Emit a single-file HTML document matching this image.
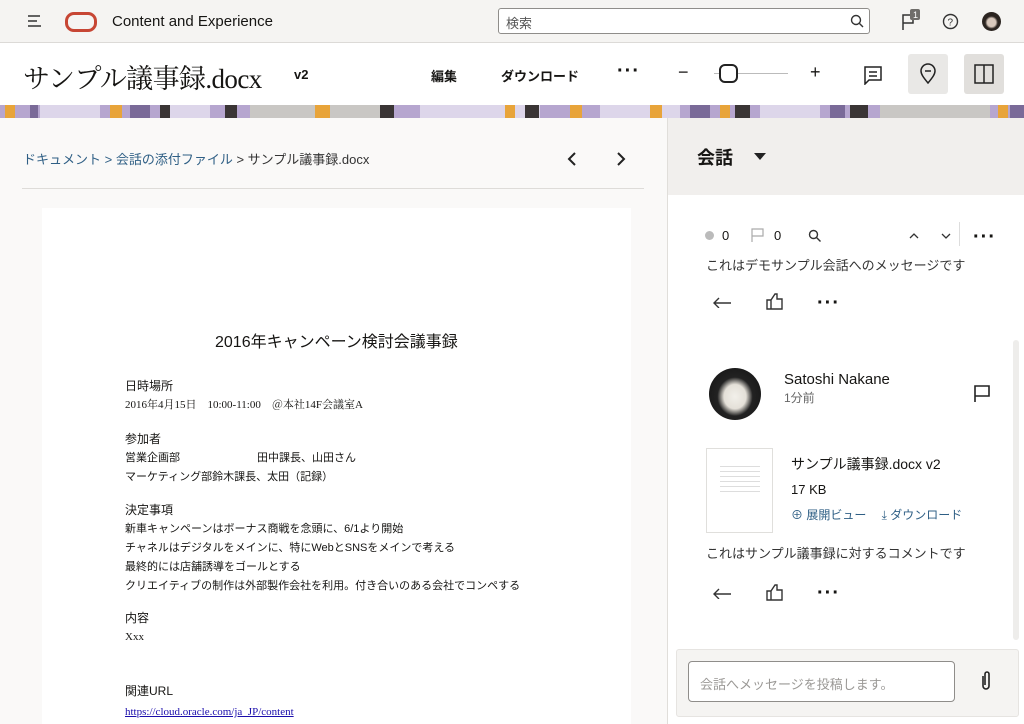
<!DOCTYPE html>
<html><head><meta charset="utf-8"><style>
*{box-sizing:border-box;margin:0;padding:0}
body{width:1024px;height:724px;overflow:hidden;position:relative;background:#faf9f8;font-family:"Liberation Sans","Noto Sans CJK JP",sans-serif;color:#161513}
.a{position:absolute;white-space:nowrap}
.serif{font-family:"Liberation Serif","Noto Serif CJK SC",serif}
.dots{font-size:20px;letter-spacing:1px;font-weight:bold}
</style></head><body>
<div class="a" style="left:0;top:0;width:1024px;height:43px;background:#f5f4f2;border-bottom:1px solid #dcdad7"></div>
<svg class="a" style="top:14px;left:27px" width="16" height="14"><path d="M1 2h12M1 7h9M1 12h13" stroke="#333" stroke-width="1.6"/></svg>
<div class="a" style="left:65px;top:12px;width:32px;height:20px;border:3.5px solid #c74634;border-radius:9px"></div>
<div class="a" style="left:112px;top:13px;font-size:15px">Content and Experience</div>
<div class="a" style="left:498px;top:8px;width:372px;height:26px;background:#fff;border:1px solid #8f8d8a;border-radius:3px"></div>
<div class="a" style="left:506px;top:13px;font-size:13px;color:#555">検索</div>
<svg class="a" style="left:850px;top:14px" width="14" height="14"><circle cx="6" cy="6" r="4.5" fill="none" stroke="#333" stroke-width="1.4"/><path d="M9.5 9.5l3.5 3.5" stroke="#333" stroke-width="1.4"/></svg>
<svg class="a" style="left:900px;top:8px" width="22" height="24"><path d="M3 22V7h10v8H3" fill="none" stroke="#333" stroke-width="1.5"/><rect x="10" y="1" width="10" height="11" rx="2" fill="#6f6d6a"/><text x="13" y="10" font-size="9" fill="#fff" font-family="Liberation Sans">1</text></svg>
<svg class="a" style="left:942px;top:13px" width="17" height="17"><circle cx="8.5" cy="8.5" r="7" fill="none" stroke="#333" stroke-width="1.4"/><text x="5.5" y="12.5" font-size="10" fill="#333" font-family="Liberation Sans">?</text></svg>
<div class="a" style="left:982px;top:12px;width:19px;height:19px;border-radius:50%;background:radial-gradient(circle at 50% 55%,#d8c8bc 30%,#2b2420 45%)"></div>
<div class="a" style="left:0;top:43px;width:1024px;height:62px;background:#fff"></div>
<div class="a serif" style="left:23px;top:57px;font-size:27px;letter-spacing:-0.6px">サンプル議事録.docx</div>
<div class="a" style="left:294px;top:67px;font-size:13px;font-weight:bold">v2</div>
<div class="a" style="left:431px;top:66px;font-size:13px;font-weight:bold">編集</div>
<div class="a" style="left:501px;top:66px;font-size:13px;font-weight:bold">ダウンロード</div>
<div class="a dots" style="left:617px;top:60px">···</div>
<div class="a" style="left:678px;top:62px;font-size:18px">−</div>
<div class="a" style="left:714px;top:73px;width:74px;height:1px;background:#bbb"></div>
<div class="a" style="left:719px;top:64px;width:19px;height:19px;border:2px solid #222;border-radius:6px;background:#fff"></div>
<div class="a" style="left:810px;top:62px;font-size:18px">+</div>
<svg class="a" style="left:863px;top:65px" width="20" height="20"><path d="M2 2h16v13H6l-4 4z" fill="none" stroke="#222" stroke-width="1.5"/><path d="M6 7h8M6 11h8" stroke="#222" stroke-width="1.5"/></svg>
<div class="a" style="left:908px;top:54px;width:40px;height:40px;background:#e9e8e6;border-radius:3px"></div>
<svg class="a" style="left:919px;top:63px" width="18" height="22"><path d="M9 20C4 14 2 11 2 8a7 7 0 0114 0c0 3-2 6-7 12z" fill="none" stroke="#222" stroke-width="1.5"/><path d="M6 8h6" stroke="#222" stroke-width="1.5"/></svg>
<div class="a" style="left:964px;top:54px;width:40px;height:40px;background:#e1dfdc;border-radius:3px"></div>
<svg class="a" style="left:974px;top:64px" width="20" height="20"><rect x="1" y="1" width="18" height="18" fill="none" stroke="#222" stroke-width="1.5"/><path d="M10 1v18" stroke="#222" stroke-width="1.5"/></svg>
<svg class="a" style="left:0;top:105px" width="1024" height="13">
<rect width="1024" height="13" fill="#b6a6cf"/>
<g fill="#ddd6ea"><rect x="40" width="60" height="13"/><rect x="170" width="40" height="13"/><rect x="420" width="120" height="13"/><rect x="600" width="80" height="13"/><rect x="760" width="60" height="13"/></g>
<g fill="#c9c7c4"><rect x="250" width="130" height="13"/><rect x="880" width="110" height="13"/></g>
<g fill="#e8a43a"><rect x="5" width="10" height="13"/><rect x="110" width="12" height="13"/><rect x="315" width="15" height="13"/><rect x="505" width="10" height="13"/><rect x="570" width="12" height="13"/><rect x="650" width="12" height="13"/><rect x="720" width="10" height="13"/><rect x="998" width="10" height="13"/></g>
<g fill="#3a3535"><rect x="160" width="10" height="13"/><rect x="225" width="12" height="13"/><rect x="380" width="14" height="13"/><rect x="525" width="14" height="13"/><rect x="735" width="15" height="13"/><rect x="850" width="18" height="13"/></g>
<g fill="#7a6a98"><rect x="30" width="8" height="13"/><rect x="130" width="20" height="13"/><rect x="690" width="20" height="13"/><rect x="830" width="15" height="13"/><rect x="1010" width="14" height="13"/></g>
</svg>
<div class="a" style="left:23px;top:149px;font-size:13px;color:#2f5f85">ドキュメント &gt; 会話の添付ファイル <span style="color:#333">&gt; サンプル議事録.docx</span></div>
<svg class="a" style="left:567px;top:152px" width="10" height="14"><path d="M8 1L2 7l6 6" fill="none" stroke="#222" stroke-width="2"/></svg>
<svg class="a" style="left:616px;top:152px" width="10" height="14"><path d="M2 1l6 6-6 6" fill="none" stroke="#222" stroke-width="2"/></svg>
<div class="a" style="left:22px;top:188px;width:622px;height:1px;background:#dedcd9"></div>
<div class="a" style="left:42px;top:208px;width:589px;height:516px;background:#fff"></div>
<div class="a" style="left:215px;top:328px;font-size:16px">2016年キャンペーン検討会議事録</div>
<div class="a" style="left:125px;top:377px;font-size:12px;line-height:18px;white-space:pre">日時場所
<span class="serif" style="font-size:11px">2016年4月15日　10:00-11:00　＠本社14F会議室A</span></div>
<div class="a" style="left:125px;top:430px;font-size:12px;line-height:18px;white-space:pre">参加者
<span style="font-size:11px">営業企画部　　　　　　　田中課長、山田さん
マーケティング部鈴木課長、太田（記録）</span></div>
<div class="a" style="left:125px;top:501px;font-size:12px;line-height:18px;white-space:pre">決定事項
<span style="font-size:11px">新車キャンペーンはボーナス商戦を念頭に、6/1より開始
チャネルはデジタルをメインに、特にWebとSNSをメインで考える
最終的には店舗誘導をゴールとする
クリエイティブの制作は外部製作会社を利用。付き合いのある会社でコンペする</span></div>
<div class="a" style="left:125px;top:609px;font-size:12px;line-height:18px;white-space:pre">内容
<span class="serif" style="font-size:11px">Xxx</span></div>
<div class="a" style="left:125px;top:681px;font-size:12px;line-height:20px;white-space:pre">関連URL
<span class="serif" style="font-size:11px;color:#1a0dab;text-decoration:underline">https://cloud.oracle.com/ja_JP/content</span></div>
<div class="a" style="left:667px;top:118px;width:357px;height:606px;background:#fff;border-left:1px solid #e0deda"></div>
<div class="a" style="left:668px;top:118px;width:356px;height:77px;background:#f1efed"></div>
<div class="a" style="left:697px;top:144px;font-size:18px;font-weight:bold">会話</div>
<svg class="a" style="left:754px;top:153px" width="12" height="8"><path d="M0 0h12L6 7z" fill="#222"/></svg>
<div class="a" style="left:705px;top:231px;width:9px;height:9px;border-radius:50%;background:#bbb"></div>
<div class="a" style="left:722px;top:228px;font-size:13px">0</div>
<svg class="a" style="left:751px;top:228px" width="14" height="14"><path d="M1 14V1h11v7H1" fill="none" stroke="#aaa" stroke-width="1.2"/></svg>
<div class="a" style="left:774px;top:228px;font-size:13px">0</div>
<svg class="a" style="left:808px;top:229px" width="14" height="14"><circle cx="5.5" cy="5.5" r="4" fill="none" stroke="#333" stroke-width="1.4"/><path d="M8.5 8.5l4 4" stroke="#333" stroke-width="1.4"/></svg>
<svg class="a" style="left:909px;top:232px" width="42" height="8"><path d="M1 6l4-4 4 4M33 2l4 4 4-4" fill="none" stroke="#333" stroke-width="1.3"/></svg>
<div class="a" style="left:959px;top:222px;width:1px;height:24px;background:#ddd"></div>
<div class="a dots" style="left:973px;top:226px">···</div>
<div class="a" style="left:706px;top:255px;font-size:13px;color:#333">これはデモサンプル会話へのメッセージです</div>
<svg class="a" style="left:712px;top:294px" width="20" height="14"><path d="M19 9H3M7 4L2 9l5 5" fill="none" stroke="#333" stroke-width="1.4"/></svg>
<svg class="a" style="left:766px;top:292px" width="18" height="18"><path d="M1 8h4v9H1zM5 8l4-6h2v5h5v10H5" fill="none" stroke="#333" stroke-width="1.4"/></svg>
<div class="a dots" style="left:817px;top:292px">···</div>
<div class="a" style="left:1013px;top:340px;width:6px;height:300px;background:#eeedeb;border-radius:3px"></div>
<div class="a" style="left:709px;top:368px;width:52px;height:52px;border-radius:50%;background:radial-gradient(ellipse at 50% 55%,#f2f0ea 0,#e4e0d8 30%,#222 48%,#111 100%)"></div>
<div class="a" style="left:784px;top:371px;font-size:15px">Satoshi Nakane</div>
<div class="a" style="left:784px;top:389px;font-size:12px;color:#666">1分前</div>
<svg class="a" style="left:973px;top:384px" width="18" height="18"><path d="M2 18V2h14v10H2" fill="none" stroke="#222" stroke-width="1.6"/></svg>
<div class="a" style="left:706px;top:448px;width:67px;height:85px;border:1px solid #e0dfdc;background:#fff"></div>
<div class="a" style="left:720px;top:462px;width:40px;height:30px;background:repeating-linear-gradient(#fff 0 4px,#ddd 4px 5px)"></div>
<div class="a" style="left:791px;top:454px;font-size:14px">サンプル議事録.docx v2</div>
<div class="a" style="left:791px;top:482px;font-size:13px">17 KB</div>
<div class="a" style="left:791px;top:506px;font-size:12px;color:#2f5f85">⊕ 展開ビュー　 ⤓ ダウンロード</div>
<div class="a" style="left:706px;top:543px;font-size:13px;color:#333">これはサンプル議事録に対するコメントです</div>
<svg class="a" style="left:712px;top:585px" width="20" height="14"><path d="M19 9H3M7 4L2 9l5 5" fill="none" stroke="#333" stroke-width="1.4"/></svg>
<svg class="a" style="left:766px;top:583px" width="18" height="18"><path d="M1 8h4v9H1zM5 8l4-6h2v5h5v10H5" fill="none" stroke="#333" stroke-width="1.4"/></svg>
<div class="a dots" style="left:817px;top:582px">···</div>
<div class="a" style="left:676px;top:649px;width:343px;height:68px;background:#f5f4f2;border:1px solid #e6e4e1;border-radius:3px"></div>
<div class="a" style="left:688px;top:661px;width:267px;height:41px;background:#fff;border:1px solid #8f8d8a;border-radius:4px"></div>
<div class="a" style="left:700px;top:674px;font-size:13px;color:#9a9895">会話へメッセージを投稿します。</div>
<svg class="a" style="left:979px;top:670px" width="14" height="22"><path d="M4 6v10a3 3 0 006 0V4a2 2 0 00-4 0v11" fill="none" stroke="#222" stroke-width="1.6"/></svg>
</body></html>
